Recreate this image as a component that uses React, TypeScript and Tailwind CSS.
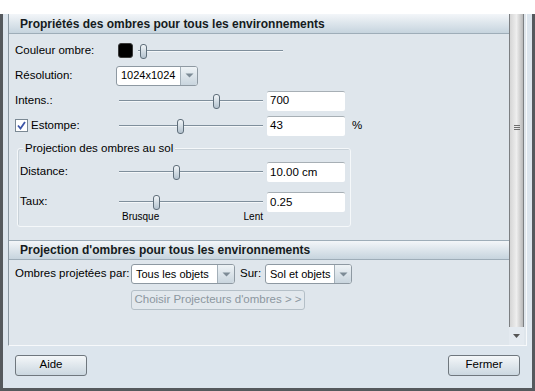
import React from "react";

const Arrow = () => (
  <svg width="9" height="5" viewBox="0 0 9 5">
    <path d="M0.5 0.5 L8.5 0.5 L4.5 4.5 Z" fill="#7d8b96" />
  </svg>
);

const Slider = ({ pos, className }: { pos: number; className: string }) => (
  <div className={`relative h-[16px] ${className}`}>
    <div className="absolute left-0 right-0 top-[7px] h-[2px] border-t border-[#7f8f9c] bg-[#f4f7f9]" />
    <div
      className="absolute top-[1px] h-[15px] w-[7px] rounded-[3px] border border-[#5f6e7a] bg-gradient-to-b from-[#f1f5f8] to-[#b3c2ce]"
      style={{ left: pos }}
    />
  </div>
);

const Field = ({ value }: { value: string }) => (
  <div className="flex h-[20px] w-[78px] items-center whitespace-nowrap rounded-[2px] border-t border-[#a7afb5] bg-white pl-[3px] text-black">
    {value}
  </div>
);

const Select = ({ value, className }: { value: string; className: string }) => (
  <div className={`flex h-[20px] overflow-hidden rounded-[3px] border border-[#8e99a2] bg-white ${className}`}>
    <div className="flex min-w-0 flex-1 items-center whitespace-nowrap pl-[4px] text-[11px] text-black">{value}</div>
    <div className="flex w-[17px] shrink-0 items-center justify-center border-l border-[#a3afb8] bg-gradient-to-b from-[#eef3f6] to-[#c9d5de]">
      <Arrow />
    </div>
  </div>
);

const Header = ({ title, top }: { title: string; top?: boolean }) => (
  <div
    className={`flex h-[20px] items-center whitespace-nowrap border-b border-[#9eadb8] bg-gradient-to-b from-[#f3f6f9] to-[#c6d4de] pl-[11px] text-[12px] font-bold text-[#151b20] ${
      top ? "border-t" : ""
    }`}
  >
    {title}
  </div>
);

const Button = ({ label }: { label: string }) => (
  <div className="flex h-[21px] w-[72px] items-center justify-center rounded-[3px] border border-[#6f777e] bg-gradient-to-b from-[#f4f7f9] to-[#cbd7e0] text-black">
    {label}
  </div>
);

export default function App() {
  return (
    <div className="flex h-[391px] w-[535px] flex-col whitespace-nowrap bg-white font-['Liberation_Sans',Arial,sans-serif] text-[11.5px] text-black">
      <div className="h-[14px]" />
      <div className="flex flex-1 flex-col border-x-[3px] border-b-[3px] border-[#55595d] bg-[#dce5ed]">
        {/* scroll panel */}
        <div className="ml-[5px] mr-[5px] flex h-[332px] border-b border-l border-r border-b-[#f7f9fb] border-l-[#8b98a2] border-r-[#f7f9fb] bg-[#dfe6ec]">
          <div className="flex w-[500px] flex-col">
            <Header title="Propriétés des ombres pour tous les environnements" />

            <div className="mt-[4px] flex flex-col pl-[6px]">
              <div className="flex h-[25px] items-center">
                <div className="w-[103px]">Couleur ombre:</div>
                <div className="h-[15px] w-[15px] rounded-[3px] border border-[#3a3a3a] bg-black" />
                <Slider pos={2} className="ml-[5px] w-[145px]" />
              </div>
              <div className="flex h-[25px] items-center">
                <div className="w-[101px]">Résolution:</div>
                <Select value="1024x1024" className="w-[82px]" />
              </div>
              <div className="flex h-[25px] items-center">
                <div className="w-[104px]">Intens.:</div>
                <Slider pos={94} className="w-[144px]" />
                <div className="ml-[4px]">
                  <Field value="700" />
                </div>
              </div>
              <div className="flex h-[25px] items-center">
                <div className="flex w-[104px] items-center">
                  <div className="flex h-[13px] w-[13px] items-center justify-center border border-[#7a8893] bg-white">
                    <svg width="9" height="9" viewBox="0 0 9 9">
                      <path d="M1 4.5 L3.5 7.5 L8 1" fill="none" stroke="#3c55a8" strokeWidth="1.8" />
                    </svg>
                  </div>
                  <span className="ml-[3px]">Estompe:</span>
                </div>
                <Slider pos={58} className="w-[144px]" />
                <div className="ml-[4px]">
                  <Field value="43" />
                </div>
                <span className="ml-[7px]">%</span>
              </div>
            </div>

            {/* group box */}
            <div className="relative ml-[8px] mt-[10px] h-[79px] w-[334px] rounded-[3px] border border-[#f5f8fa] shadow-[inset_1px_1px_0_#c9d2d9]">
              <div className="absolute -top-[8px] left-[5px] bg-[#dfe6ec] px-[2px] leading-[14px]">
                Projection des ombres au sol
              </div>
              <div className="flex flex-col pl-[2px] pt-[13px]">
                <div className="flex h-[20px] items-center">
                  <div className="w-[99px]">Distance:</div>
                  <Slider pos={54} className="w-[144px]" />
                  <div className="ml-[4px]">
                    <Field value="10.00 cm" />
                  </div>
                </div>
                <div className="mt-[10px] flex h-[20px] items-center">
                  <div className="w-[99px]">Taux:</div>
                  <Slider pos={34} className="w-[144px]" />
                  <div className="ml-[4px]">
                    <Field value="0.25" />
                  </div>
                </div>
                <div className="flex h-[10px] w-[243px] items-center justify-between pl-[102px] text-[10px] leading-[10px]">
                  <span>Brusque</span>
                  <span>Lent</span>
                </div>
              </div>
            </div>

            <div className="mt-[13px]">
              <Header title="Projection d'ombres pour tous les environnements" top />
            </div>

            <div className="mt-[4px] flex h-[20px] items-center pl-[6px]">
              <div className="w-[116px]">Ombres projetées par:</div>
              <Select value="Tous les objets" className="w-[104px]" />
              <span className="ml-[5px] w-[25px]">Sur:</span>
              <Select value="Sol et objets" className="w-[87px]" />
            </div>

            <div className="ml-[122px] mt-[6px] flex h-[20px] w-[174px] items-center justify-center rounded-[3px] border border-[#b4bfc7] bg-[#e2e8ed] text-[#8c979f]">
              Choisir Projecteurs d'ombres &gt; &gt;
            </div>
          </div>

          {/* scrollbar */}
          <div className="flex w-[15px] flex-col">
            <div className="flex h-[313px] items-center justify-center border-x border-[#7c7f82] bg-gradient-to-r from-[#d5d5d5] via-[#eeeeee] to-[#b9b9b9]">
              <div className="mb-[86px] flex flex-col gap-[1px]">
                <div className="h-[1px] w-[6px] bg-[#6e6e6e]" />
                <div className="h-[1px] w-[6px] bg-[#6e6e6e]" />
                <div className="h-[1px] w-[6px] bg-[#6e6e6e]" />
              </div>
            </div>
            <div className="flex flex-1 items-center justify-center bg-[#e4eaf0]">
              <svg width="7" height="4" viewBox="0 0 7 4">
                <path d="M0 0 L7 0 L3.5 4 Z" fill="#555" />
              </svg>
            </div>
          </div>
        </div>

        {/* bottom buttons */}
        <div className="flex flex-1 items-center justify-between px-[12px] pb-[4px]">
          <Button label="Aide" />
          <Button label="Fermer" />
        </div>
      </div>
    </div>
  );
}
